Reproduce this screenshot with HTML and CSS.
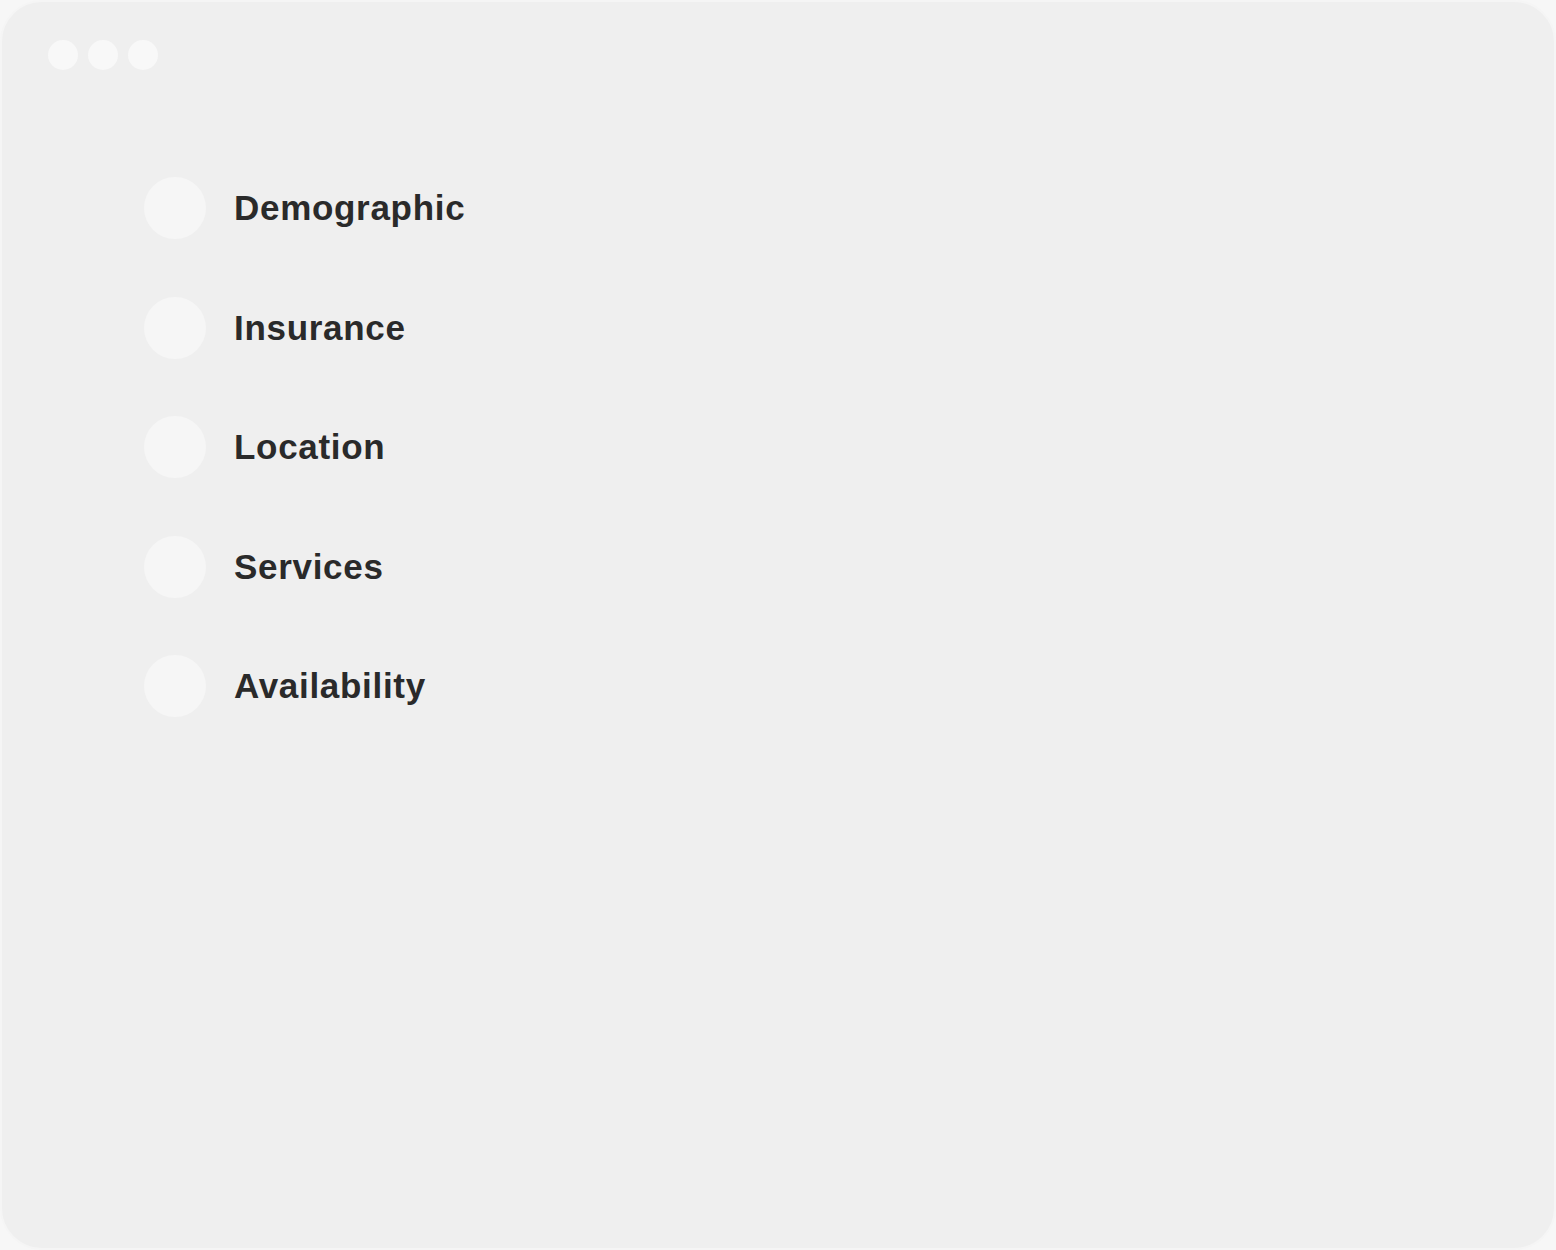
FILE: index.html
```html
<!DOCTYPE html>
<html lang="en">
<head>
<meta charset="utf-8">
<title>Filters</title>
<link rel="stylesheet" href="styles.css">
</head>
<body>
<div class="window">
  <div class="dots">
    <span class="dot"></span><span class="dot"></span><span class="dot"></span>
  </div>
  <ul class="list">
    <li class="item"><span class="bullet"></span><span class="label">Demographic</span></li>
    <li class="item"><span class="bullet"></span><span class="label">Insurance</span></li>
    <li class="item"><span class="bullet"></span><span class="label">Location</span></li>
    <li class="item"><span class="bullet"></span><span class="label">Services</span></li>
    <li class="item"><span class="bullet"></span><span class="label">Availability</span></li>
  </ul>
</div>
</body>
</html>
```
FILE: styles.css
```css
html, body {
  margin: 0;
  padding: 0;
  background: #f7f7f7;
}
body {
  width: 1556px;
  height: 1250px;
  overflow: hidden;
  font-family: "Liberation Sans", Arial, sans-serif;
}
.window {
  box-sizing: border-box;
  width: 1556px;
  height: 1250px;
  border-radius: 42px;
  background: #efefef;
  border: 2px solid #f5f5f5;
  padding: 38px 0 0 46px;
}
.dots {
  display: flex;
  gap: 10px;
}
.dot {
  width: 30px;
  height: 30px;
  border-radius: 50%;
  background: #f8f8f8;
}
.list {
  list-style: none;
  margin: 107px 0 0 96px;
  padding: 0;
  display: flex;
  flex-direction: column;
  gap: 57.5px;
}
.item {
  display: flex;
  align-items: center;
  gap: 28px;
  height: 62px;
}
.bullet {
  width: 62px;
  height: 62px;
  border-radius: 50%;
  background: #f6f6f6;
  flex: none;
}
.label {
  font-size: 35px;
  font-weight: 700;
  color: #2a2a2a;
  letter-spacing: 0.7px;
}
```
